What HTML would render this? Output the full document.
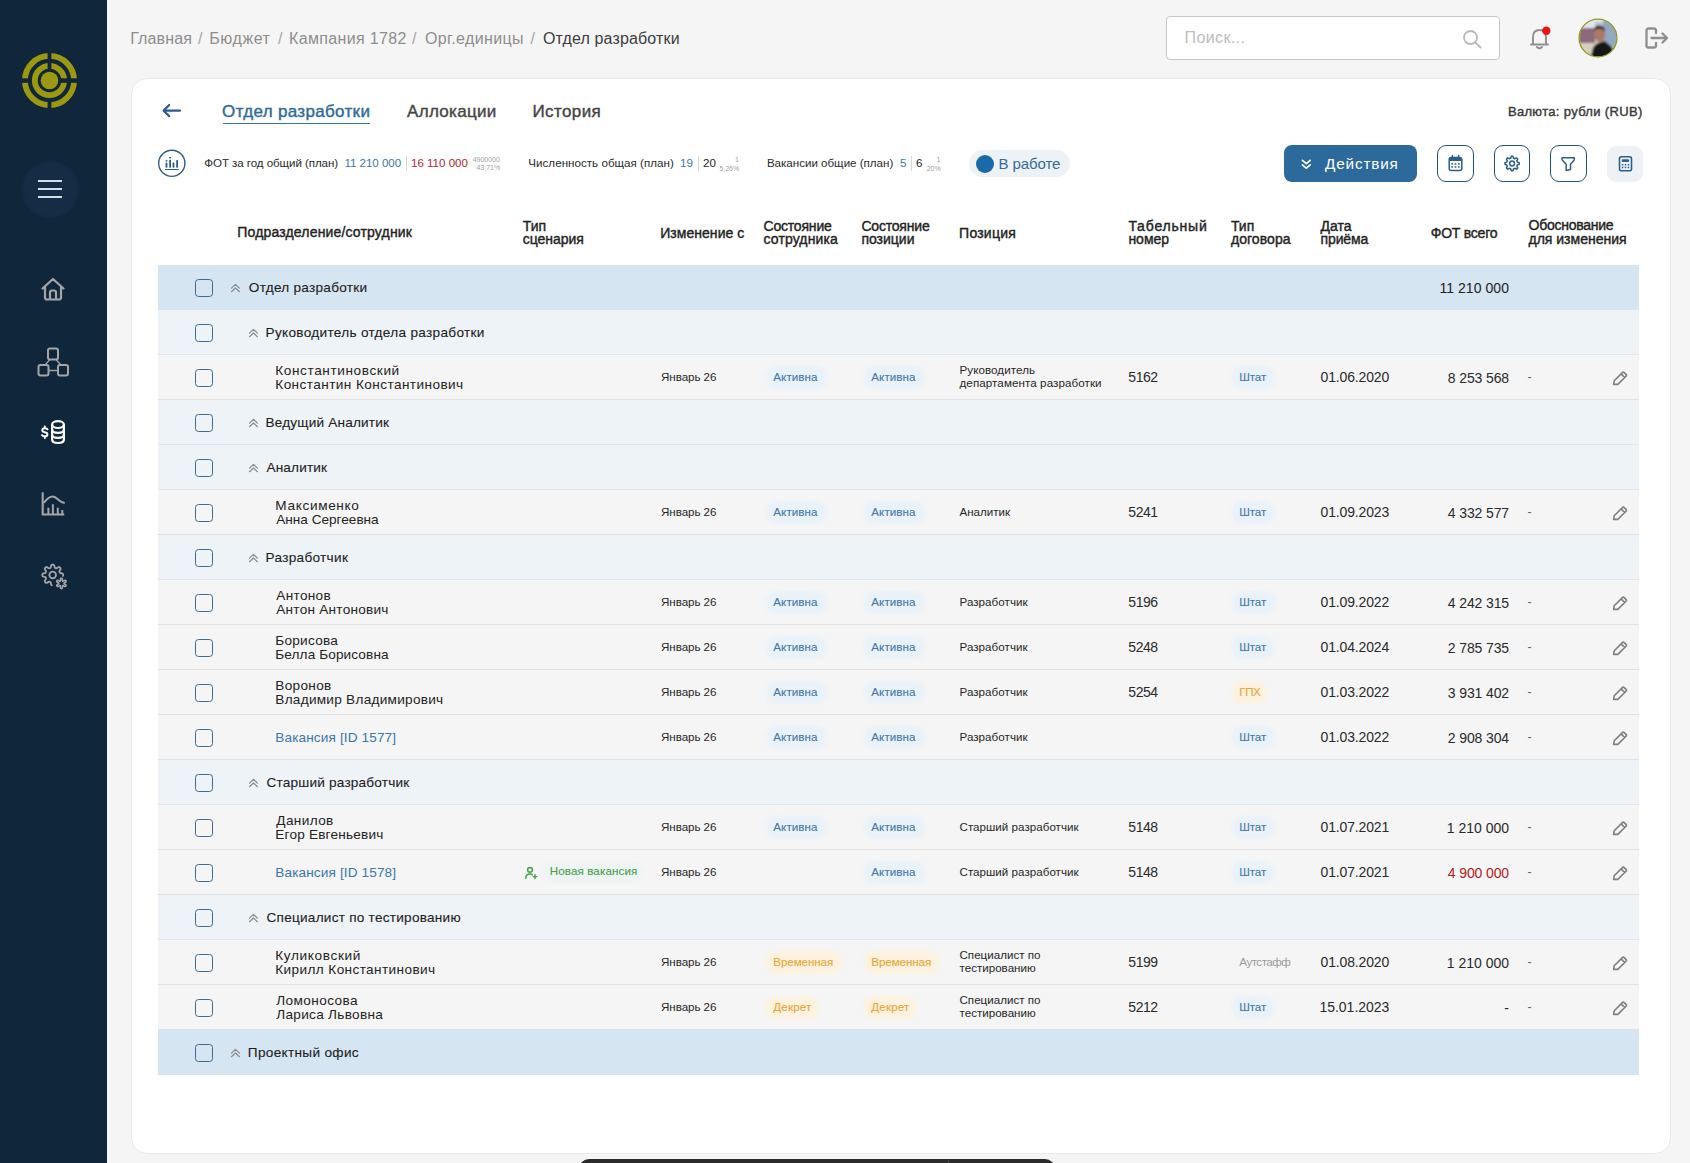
<!DOCTYPE html><html><head><meta charset="utf-8"><style>
html,body{margin:0;padding:0}
body{width:1690px;height:1163px;overflow:hidden;position:relative;background:#f5f5f5;font-family:"Liberation Sans",sans-serif;}
.t{position:absolute;white-space:nowrap;line-height:1;}
.r{position:absolute;}
.m{-webkit-text-stroke:0.4px currentColor;}
.m2{-webkit-text-stroke:0.12px currentColor;}
.m3{-webkit-text-stroke:0.1px currentColor;}
</style></head><body>
<div class="r" style="left:0px;top:0px;width:107px;height:1163px;background:#10263a;"></div>
<svg class="r" style="left:22px;top:53px;" width="55" height="55" viewBox="0 0 55 55" fill="none">
<g fill="none" stroke="#9b9814">
<circle cx="27.5" cy="27.5" r="24.6" stroke-width="5.8"/>
<circle cx="27.5" cy="27.5" r="14.7" stroke-width="5.8"/>
</g>
<circle cx="27.5" cy="27.5" r="8.8" fill="#9b9814"/>
<rect x="25.6" y="0" width="3.8" height="16.5" fill="#10263a"/>
<rect x="25.6" y="48" width="3.8" height="8" fill="#10263a"/>
<rect x="0" y="25.3" width="7" height="4.5" fill="#10263a"/>
<rect x="38.5" y="25.3" width="17" height="4.5" fill="#10263a"/>
</svg>
<div class="r" style="left:21.5px;top:160.5px;width:57px;height:57px;border-radius:50%;background:#142c44;filter:blur(1px);"></div>
<div class="r" style="left:38px;top:180px;width:24px;height:2px;background:#d3dde6;"></div>
<div class="r" style="left:38px;top:188px;width:24px;height:2px;background:#d3dde6;"></div>
<div class="r" style="left:38px;top:196px;width:24px;height:2px;background:#d3dde6;"></div>
<svg class="r" style="left:40px;top:276px;" width="26" height="26" viewBox="0 0 26 26" fill="none"><path d="M2.5 12.5 L13 3 L23.5 12.5 M5 10.5 V21.5 Q5 23.5 7 23.5 H19 Q21 23.5 21 21.5 V10.5 M10 23.5 V16.5 Q10 14.5 12 14.5 H14 Q16 14.5 16 16.5 V23.5" stroke="#a3a6a9" stroke-width="2.2" stroke-linecap="round" stroke-linejoin="round"/></svg>
<svg class="r" style="left:37px;top:347px;" width="32" height="30" viewBox="0 0 32 30" fill="none"><g stroke="#a3a6a9" stroke-width="2" stroke-linejoin="round"><rect x="11" y="1.5" width="10" height="11" rx="2"/><rect x="1.5" y="18" width="10" height="10.5" rx="2"/><rect x="21" y="18" width="10" height="10.5" rx="2"/><path d="M11.5 23.5 H21" stroke-width="1.4"/><path d="M13 12.5 L8 18 M19 12.5 L24 18" stroke-width="1.2"/></g></svg>
<svg class="r" style="left:40px;top:419px;" width="27" height="27" viewBox="0 0 27 27" fill="none"><path d="M4.8 7.6 V9.2 M7.5 10.3 Q7 9.2 4.8 9.2 Q2.3 9.2 2.3 11.2 Q2.3 12.8 4.8 13.2 Q7.4 13.6 7.4 15.4 Q7.4 17.3 4.8 17.3 Q2.6 17.3 2 16.1 M4.8 17.3 V18.9" stroke="#fff" stroke-width="2" fill="none" stroke-linecap="round"/><g stroke="#fff" stroke-width="2.2" fill="none"><ellipse cx="18" cy="5.6" rx="5.9" ry="3.4"/><path d="M12.1 5.6 V20.6 Q12.1 24 18 24 Q23.9 24 23.9 20.6 V5.6"/><path d="M12.1 10.6 Q12.1 13.9 18 13.9 Q23.9 13.9 23.9 10.6"/><path d="M12.1 15.6 Q12.1 18.9 18 18.9 Q23.9 18.9 23.9 15.6"/></g></svg>
<svg class="r" style="left:40px;top:491px;" width="26" height="26" viewBox="0 0 26 26" fill="none"><g stroke="#a3a6a9" stroke-width="2.1" fill="none" stroke-linecap="butt"><path d="M2.7 1.2 V23.5 H24.2"/><path d="M8.4 23.5 V16.7 M12.9 23.5 V13.3 M17.8 23.5 V16.7 M22.3 23.5 V19.1" stroke-width="2"/><path d="M4.2 11.3 C6.5 8.5 9 5.6 12.8 5.6 C16.8 5.6 19.2 11.2 23.9 11.8" stroke-width="2" stroke-linecap="round"/></g></svg>
<svg class="r" style="left:40px;top:562px;" width="28" height="28" viewBox="0 0 28 28" fill="none"><g stroke="#a3a6a9" stroke-width="1.8" fill="none" stroke-linecap="round" stroke-linejoin="round"><path d="M11.80 23.23 L11.52 23.04 L11.27 22.70 L11.07 22.18 L10.92 21.54 L10.80 20.95 L10.67 20.53 L10.51 20.26 L10.33 20.09 L10.14 19.97 L9.94 19.87 L9.74 19.79 L9.53 19.72 L9.30 19.68 L9.05 19.70 L8.72 19.80 L8.30 20.04 L7.78 20.39 L7.22 20.71 L6.73 20.90 L6.34 20.92 L6.02 20.84 L5.75 20.69 L5.50 20.50 L5.28 20.29 L5.09 20.05 L4.92 19.79 L4.80 19.50 L4.78 19.14 L4.89 18.69 L5.17 18.15 L5.53 17.60 L5.82 17.13 L5.98 16.78 L6.02 16.50 L6.00 16.26 L5.94 16.04 L5.87 15.84 L5.78 15.64 L5.67 15.45 L5.52 15.26 L5.30 15.10 L4.94 14.95 L4.42 14.83 L3.78 14.69 L3.19 14.52 L2.78 14.28 L2.54 14.01 L2.40 13.72 L2.33 13.42 L2.30 13.11 L2.31 12.81 L2.34 12.50 L2.43 12.20 L2.59 11.91 L2.87 11.65 L3.33 11.43 L3.95 11.27 L4.57 11.14 L5.05 11.01 L5.36 10.86 L5.56 10.69 L5.70 10.50 L5.80 10.31 L5.89 10.11 L5.96 9.90 L6.01 9.68 L6.02 9.44 L5.95 9.14 L5.76 8.76 L5.44 8.26 L5.08 7.70 L4.84 7.19 L4.77 6.76 L4.83 6.42 L4.96 6.14 L5.13 5.88 L5.34 5.65 L5.56 5.45 L5.82 5.27 L6.10 5.13 L6.44 5.07 L6.85 5.13 L7.36 5.36 L7.92 5.71 L8.42 6.04 L8.82 6.24 L9.12 6.31 L9.36 6.31 L9.59 6.26 L9.79 6.19 L9.99 6.11 L10.19 6.01 L10.38 5.87 L10.55 5.68 L10.70 5.38 L10.83 4.91 L10.96 4.30 L11.12 3.67 L11.33 3.20 L11.59 2.90 L11.88 2.74 L12.18 2.65 L12.48 2.61 L12.79 2.60 L13.10 2.63 L13.40 2.69 L13.69 2.82 L13.96 3.06 L14.20 3.46 L14.38 4.03 L14.52 4.67 L14.64 5.21 L14.79 5.58 L14.95 5.80 L15.13 5.96 L15.33 6.07 L15.52 6.16 L15.73 6.24 L15.94 6.29 L16.18 6.32 L16.45 6.28 L16.80 6.14 L17.26 5.85 L17.81 5.49 L18.35 5.20 L18.81 5.08 L19.17 5.10 L19.47 5.21 L19.74 5.37 L19.97 5.57 L20.19 5.79 L20.37 6.03 L20.53 6.30 L20.62 6.62 L20.61 7.00 L20.43 7.48 L20.11 8.03 L19.76 8.57 L19.51 9.00 L19.40 9.32 L19.38 9.59 L19.42 9.81 L19.48 10.02 L19.56 10.23 L19.66 10.42 L19.78 10.61 L19.95 10.79 L20.20 10.95 L20.61 11.09 L21.19 11.21 L21.83 11.36 L22.37 11.56 L22.72 11.80 L22.92 12.08 L23.03 12.38 L23.08 12.68 L23.10 12.99 L23.09 13.29 L23.03 13.60 L22.93 13.90"/><circle cx="12.7" cy="13" r="3.3"/><path d="M24.00 21.40 L24.01 21.50 L24.04 21.61 L24.10 21.72 L24.23 21.85 L24.47 22.01 L24.86 22.23 L25.32 22.51 L25.72 22.80 L25.96 23.08 L26.06 23.33 L26.07 23.55 L26.02 23.75 L25.94 23.94 L25.83 24.11 L25.70 24.27 L25.54 24.41 L25.32 24.49 L25.03 24.50 L24.63 24.39 L24.16 24.16 L23.71 23.89 L23.36 23.70 L23.14 23.60 L22.98 23.57 L22.86 23.59 L22.76 23.62 L22.67 23.67 L22.59 23.73 L22.51 23.82 L22.45 23.95 L22.42 24.15 L22.41 24.50 L22.41 24.98 L22.39 25.53 L22.31 25.98 L22.17 26.28 L22.00 26.45 L21.80 26.54 L21.60 26.59 L21.40 26.60 L21.20 26.59 L21.00 26.54 L20.80 26.45 L20.63 26.28 L20.49 25.98 L20.41 25.53 L20.39 24.98 L20.39 24.50 L20.38 24.15 L20.35 23.95 L20.29 23.82 L20.21 23.73 L20.13 23.67 L20.04 23.62 L19.94 23.59 L19.82 23.57 L19.66 23.60 L19.44 23.70 L19.09 23.89 L18.64 24.16 L18.17 24.39 L17.77 24.50 L17.48 24.49 L17.26 24.41 L17.10 24.27 L16.97 24.11 L16.86 23.94 L16.78 23.75 L16.73 23.55 L16.74 23.33 L16.84 23.08 L17.08 22.80 L17.48 22.51 L17.94 22.23 L18.33 22.01 L18.57 21.85 L18.70 21.72 L18.76 21.61 L18.79 21.50 L18.80 21.40 L18.79 21.30 L18.76 21.19 L18.70 21.08 L18.57 20.95 L18.33 20.79 L17.94 20.57 L17.48 20.29 L17.08 20.00 L16.84 19.72 L16.74 19.47 L16.73 19.25 L16.78 19.05 L16.86 18.86 L16.97 18.69 L17.10 18.53 L17.26 18.39 L17.48 18.31 L17.77 18.30 L18.17 18.41 L18.64 18.64 L19.09 18.91 L19.44 19.10 L19.66 19.20 L19.82 19.23 L19.94 19.21 L20.04 19.18 L20.13 19.13 L20.21 19.07 L20.29 18.98 L20.35 18.85 L20.38 18.65 L20.39 18.30 L20.39 17.82 L20.41 17.27 L20.49 16.82 L20.63 16.52 L20.80 16.35 L21.00 16.26 L21.20 16.21 L21.40 16.20 L21.60 16.21 L21.80 16.26 L22.00 16.35 L22.17 16.52 L22.31 16.82 L22.39 17.27 L22.41 17.82 L22.41 18.30 L22.42 18.65 L22.45 18.85 L22.51 18.98 L22.59 19.07 L22.67 19.13 L22.76 19.18 L22.86 19.21 L22.98 19.23 L23.14 19.20 L23.36 19.10 L23.71 18.91 L24.16 18.64 L24.63 18.41 L25.03 18.30 L25.32 18.31 L25.54 18.39 L25.70 18.53 L25.83 18.69 L25.94 18.86 L26.02 19.05 L26.07 19.25 L26.06 19.47 L25.96 19.72 L25.72 20.00 L25.32 20.29 L24.86 20.57 L24.47 20.79 L24.23 20.95 L24.10 21.08 L24.04 21.19 L24.01 21.30 L24.00 21.40" stroke-width="1.6"/></g></svg>
<div class="t" style="left:130.20px;top:30.66px;font-size:16px;color:#8d8d8d;letter-spacing:0.128px;">Главная</div>
<div class="t" style="left:198.00px;top:30.66px;font-size:16px;color:#a5a5a5;">/</div>
<div class="t" style="left:209.20px;top:30.66px;font-size:16px;color:#8d8d8d;letter-spacing:0.569px;">Бюджет</div>
<div class="t" style="left:278.00px;top:30.66px;font-size:16px;color:#a5a5a5;">/</div>
<div class="t" style="left:289.00px;top:30.66px;font-size:16px;color:#8d8d8d;letter-spacing:0.337px;">Кампания 1782</div>
<div class="t" style="left:412.00px;top:30.66px;font-size:16px;color:#a5a5a5;">/</div>
<div class="t" style="left:424.90px;top:30.66px;font-size:16px;color:#8d8d8d;letter-spacing:0.367px;">Орг.единицы</div>
<div class="t" style="left:530.50px;top:30.66px;font-size:16px;color:#a5a5a5;">/</div>
<div class="t" style="left:542.90px;top:30.66px;font-size:16px;color:#3d3d3d;letter-spacing:0.152px;">Отдел разработки</div>
<div class="r" style="left:1166px;top:16px;width:332px;height:42px;background:#fff;border:1px solid #c6c6c6;border-radius:4px;"></div>
<div class="t" style="left:1184.50px;top:29.96px;font-size:16px;color:#bdbdbd;letter-spacing:0.396px;">Поиск...</div>
<svg class="r" style="left:1462px;top:29px;" width="22" height="20" viewBox="0 0 22 20" fill="none"><circle cx="8.5" cy="8.5" r="6.5" stroke="#b8b8b8" stroke-width="1.8"/><path d="M13.3 13.3 L18.5 18.5" stroke="#b8b8b8" stroke-width="1.8" stroke-linecap="round"/></svg>
<svg class="r" style="left:1529px;top:26px;" width="24" height="24" viewBox="0 0 24 24" fill="none"><path d="M4 18 V11 Q4 4 10.5 4 Q17 4 17 11 V18 M2 18.5 H19 M8 21 Q10.5 23.5 13 21" stroke="#8f8f8f" stroke-width="1.9" stroke-linecap="round" fill="none"/><circle cx="17.3" cy="4.8" r="4.2" fill="#e8141b"/></svg>
<svg class="r" style="left:1577.5px;top:17.8px;" width="40" height="40" viewBox="0 0 40 40" fill="none"><defs><clipPath id="avc"><circle cx="20" cy="20" r="18.6"/></clipPath><filter id="avb"><feGaussianBlur stdDeviation="0.9"/></filter></defs>
<g clip-path="url(#avc)"><g filter="url(#avb)">
<rect x="0" y="0" width="40" height="40" fill="#dfe6ec"/>
<rect x="0" y="22" width="40" height="18" fill="#d6cfbd"/>
<rect x="1" y="10" width="16" height="15" fill="#8b6a7a"/>
<rect x="25" y="2" width="15" height="27" fill="#93a9c2"/>
<rect x="17" y="4" width="8" height="8" fill="#b9c6d6"/>
<ellipse cx="21.6" cy="16.5" rx="5.6" ry="7.6" fill="#a97a66"/>
<path d="M15.8 13 Q16 7.5 21.5 7.6 Q27.2 7.7 27.2 13.5 Q25 10.6 21.5 10.8 Q17.6 10.8 15.8 13 Z" fill="#3b2a22"/>
<path d="M12.5 40 L15 30 Q17.5 25 22 24.5 L26 23 Q31 25.5 35.5 31.5 L40 40 Z" fill="#121318"/>
</g></g>
<circle cx="20" cy="20" r="18.9" stroke="#8f9a1f" stroke-width="1.3" fill="none"/></svg>
<svg class="r" style="left:1644px;top:26px;" width="27" height="24" viewBox="0 0 27 24" fill="none"><path d="M10 2.5 H4.5 Q2.5 2.5 2.5 4.5 V19.5 Q2.5 21.5 4.5 21.5 H10 Q12 21.5 12 19.5 V17 M12 7 V4.5 Q12 2.5 10 2.5" stroke="#8f8f8f" stroke-width="2.3" fill="none" stroke-linecap="round"/><path d="M7.5 12 H23 M18.5 7.5 L23 12 L18.5 16.5" stroke="#8f8f8f" stroke-width="2.3" fill="none" stroke-linecap="round" stroke-linejoin="round"/></svg>
<div class="r" style="left:131px;top:78px;width:1539.5px;height:1075.5px;background:#fff;border:1px solid #e9e9e9;border-radius:16px;box-sizing:border-box;"></div>
<svg class="r" style="left:160px;top:100px;" width="24" height="20" viewBox="0 0 24 20" fill="none"><path d="M3.6 10.6 H20 M9.2 5 L3.6 10.6 L9.2 16.2" stroke="#2b5e8c" stroke-width="2.2" fill="none" stroke-linecap="round" stroke-linejoin="round"/></svg>
<div class="t m" style="left:222.10px;top:103.21px;font-size:17px;color:#2e6a9c;letter-spacing:0.329px;">Отдел разработки</div>
<div class="r" style="left:222.5px;top:122.8px;width:147px;height:1.6px;background:#3a72a4;border-radius:1px;"></div>
<div class="t m" style="left:407.00px;top:103.21px;font-size:17px;color:#454545;letter-spacing:0.310px;">Аллокации</div>
<div class="t m" style="left:532.40px;top:103.21px;font-size:17px;color:#454545;letter-spacing:0.413px;">История</div>
<div class="t m" style="left:1507.90px;top:104.80px;font-size:13px;color:#3a3a3a;letter-spacing:0.331px;">Валюта: рубли (RUB)</div>
<svg class="r" style="left:157px;top:149px;" width="30" height="30" viewBox="0 0 30 30" fill="none"><circle cx="14.8" cy="14.3" r="13.1" stroke="#2d5d88" stroke-width="1.4"/><g fill="#2d5d88"><rect x="8.6" y="11.1" width="1.8" height="1.5" rx=".5"/><rect x="8.6" y="13.4" width="1.8" height="5.3" rx=".6"/><rect x="12.2" y="8" width="1.8" height="1.5" rx=".5"/><rect x="12.2" y="10.7" width="1.8" height="8" rx=".6"/><rect x="15.6" y="13.5" width="1.8" height="5.2" rx=".6"/><rect x="19.2" y="11.1" width="1.8" height="7.6" rx=".6"/><rect x="8" y="20" width="13.8" height="1.1" rx=".5"/></g></svg>
<div class="t" style="left:204.30px;top:156.68px;font-size:11.6px;color:#2b2b2b;letter-spacing:-0.083px;">ФОТ за год общий (план)</div>
<div class="t" style="left:344.40px;top:156.68px;font-size:11.6px;color:#3c78a8;letter-spacing:-0.046px;">11 210 000</div>
<div class="r" style="left:405.5px;top:156px;width:1px;height:15px;background:#d9d9d9;"></div>
<div class="t" style="left:411.00px;top:156.68px;font-size:11.6px;color:#b3262b;letter-spacing:-0.024px;">16 110 000</div>
<div class="t" style="left:472.64px;top:155.57px;font-size:7px;color:#a0a0a0;">4900000</div>
<div class="t" style="left:476.48px;top:164.07px;font-size:7px;color:#a0a0a0;">43,71%</div>
<div class="t" style="left:528.30px;top:156.68px;font-size:11.6px;color:#2b2b2b;letter-spacing:0.023px;">Численность общая (план)</div>
<div class="t" style="left:680.00px;top:156.68px;font-size:11.6px;color:#3c78a8;">19</div>
<div class="r" style="left:698px;top:156px;width:1px;height:15px;background:#d9d9d9;"></div>
<div class="t" style="left:703.00px;top:156.68px;font-size:11.6px;color:#222;">20</div>
<div class="t" style="left:735.00px;top:156.07px;font-size:7px;color:#a0a0a0;">1</div>
<div class="t" style="left:719.38px;top:164.57px;font-size:7px;color:#a0a0a0;">5,26%</div>
<div class="t" style="left:766.90px;top:156.68px;font-size:11.6px;color:#2b2b2b;letter-spacing:-0.018px;">Вакансии общие (план)</div>
<div class="t" style="left:900.00px;top:156.68px;font-size:11.6px;color:#3c78a8;">5</div>
<div class="r" style="left:911px;top:156px;width:1px;height:15px;background:#d9d9d9;"></div>
<div class="t" style="left:916.00px;top:156.68px;font-size:11.6px;color:#222;">6</div>
<div class="t" style="left:936.50px;top:156.07px;font-size:7px;color:#a0a0a0;">1</div>
<div class="t" style="left:926.71px;top:164.57px;font-size:7px;color:#a0a0a0;">20%</div>
<div class="r" style="left:969px;top:150px;width:101px;height:27px;background:#edf2f7;border-radius:14px;"></div>
<div class="r" style="left:975.5px;top:154.5px;width:18.5px;height:18.5px;background:#1a69a8;border-radius:50%;"></div>
<div class="t" style="left:998.50px;top:156.10px;font-size:15px;color:#36699a;letter-spacing:-0.095px;">В работе</div>
<div class="r" style="left:1283.5px;top:145px;width:133.5px;height:36.6px;background:#2d6a9c;border-radius:8px;"></div>
<svg class="r" style="left:1300px;top:156.5px;" width="13" height="16" viewBox="0 0 13 16" fill="none"><path d="M2.4 3.3 L6.3 6.6 L10.2 3.3 M2.4 7.9 L6.3 11.2 L10.2 7.9" stroke="#fff" stroke-width="1.7" fill="none" stroke-linecap="round" stroke-linejoin="round"/></svg>
<div class="t" style="left:1325.00px;top:155.85px;font-size:15.3px;color:#ffffff;letter-spacing:0.837px;">Действия</div>
<div class="r" style="left:1437px;top:145px;width:36.5px;height:36.6px;border:1.4px solid #24527f;border-radius:9px;box-sizing:border-box;"></div>
<div class="r" style="left:1493.5px;top:145px;width:36.5px;height:36.6px;border:1.4px solid #24527f;border-radius:9px;box-sizing:border-box;"></div>
<div class="r" style="left:1550px;top:145px;width:36.5px;height:36.6px;border:1.4px solid #24527f;border-radius:9px;box-sizing:border-box;"></div>
<div class="r" style="left:1606.5px;top:145.5px;width:36px;height:36.2px;background:#eef2f6;border-radius:9px;"></div>
<svg class="r" style="left:1446px;top:154px;" width="18" height="18" viewBox="0 0 18 18" fill="none"><rect x="3.2" y="3.4" width="12.6" height="13" rx="2" stroke="#2b5f8e" stroke-width="1.5" fill="none"/><rect x="3.2" y="3.6" width="12.6" height="3.4" rx="1" fill="#2b5f8e"/><path d="M6.4 1.4 V4 M12.6 1.4 V4" stroke="#2b5f8e" stroke-width="1.5" stroke-linecap="round"/><g fill="#2b5f8e"><rect x="5.3" y="9.2" width="1.7" height="1.5"/><rect x="8.65" y="9.2" width="1.7" height="1.5"/><rect x="12" y="9.2" width="1.7" height="1.5"/><rect x="5.3" y="12.2" width="1.7" height="1.5"/><rect x="8.65" y="12.2" width="1.7" height="1.5"/><rect x="12" y="12.2" width="1.7" height="1.5"/></g></svg>
<svg class="r" style="left:1502.5px;top:154px;" width="18" height="18" viewBox="0 0 18 18" fill="none"><path d="M14.54 8.17 L16.25 8.64 L16.25 10.36 L14.54 10.83 L13.89 12.41 L14.76 13.95 L13.55 15.16 L12.01 14.29 L10.43 14.94 L9.96 16.65 L8.24 16.65 L7.77 14.94 L6.19 14.29 L4.65 15.16 L3.44 13.95 L4.31 12.41 L3.66 10.83 L1.95 10.36 L1.95 8.64 L3.66 8.17 L4.31 6.59 L3.44 5.05 L4.65 3.84 L6.19 4.71 L7.77 4.06 L8.24 2.35 L9.96 2.35 L10.43 4.06 L12.01 4.71 L13.55 3.84 L14.76 5.05 L13.89 6.59Z" stroke="#2b5f8e" stroke-width="1.5" fill="none" stroke-linejoin="round"/><circle cx="9.1" cy="9.5" r="2.4" stroke="#2b5f8e" stroke-width="1.5" fill="none"/></svg>
<svg class="r" style="left:1559px;top:154px;" width="18" height="18" viewBox="0 0 18 18" fill="none"><path d="M3 3.7 H15.3 V5.3 Q15.3 6 14.6 6.8 L11.5 10.2 V15.6 L7.2 16.6 V10.2 L3.9 6.8 Q3 6 3 5.3 Z" stroke="#2b5f8e" stroke-width="1.5" fill="none" stroke-linejoin="round"/></svg>
<svg class="r" style="left:1615.5px;top:154px;" width="18" height="18" viewBox="0 0 18 18" fill="none"><rect x="3.5" y="2.7" width="12" height="14" rx="2" stroke="#2b5f8e" stroke-width="1.6" fill="none"/><rect x="5.8" y="5.2" width="7.4" height="2.8" rx="1.3" fill="#2b5f8e"/><g fill="#2b5f8e"><rect x="5.8" y="10" width="1.5" height="1.5"/><rect x="8.75" y="10" width="1.5" height="1.5"/><rect x="11.7" y="10" width="1.5" height="1.5"/><rect x="5.8" y="12.7" width="1.5" height="1.5"/><rect x="8.75" y="12.7" width="1.5" height="1.5"/><rect x="11.7" y="12.7" width="1.5" height="1.5"/></g></svg>
<div class="t m" style="left:237.30px;top:225.35px;font-size:14px;color:#232323;letter-spacing:0.166px;">Подразделение/сотрудник</div>
<div class="t m" style="left:522.80px;top:218.95px;font-size:14px;color:#232323;">Тип</div>
<div class="t m" style="left:522.80px;top:232.45px;font-size:14px;color:#232323;letter-spacing:-0.053px;">сценария</div>
<div class="t m" style="left:660.20px;top:225.55px;font-size:14px;color:#232323;letter-spacing:0.046px;">Изменение с</div>
<div class="t m" style="left:763.50px;top:218.95px;font-size:14px;color:#232323;letter-spacing:-0.196px;">Состояние</div>
<div class="t m" style="left:763.50px;top:232.45px;font-size:14px;color:#232323;letter-spacing:0.126px;">сотрудника</div>
<div class="t m" style="left:861.40px;top:218.95px;font-size:14px;color:#232323;letter-spacing:-0.196px;">Состояние</div>
<div class="t m" style="left:861.40px;top:232.45px;font-size:14px;color:#232323;">позиции</div>
<div class="t m" style="left:959.10px;top:225.55px;font-size:14px;color:#232323;letter-spacing:0.222px;">Позиция</div>
<div class="t m" style="left:1128.40px;top:218.95px;font-size:14px;color:#232323;letter-spacing:0.806px;">Табельный</div>
<div class="t m" style="left:1128.40px;top:232.45px;font-size:14px;color:#232323;">номер</div>
<div class="t m" style="left:1230.90px;top:218.95px;font-size:14px;color:#232323;">Тип</div>
<div class="t m" style="left:1230.90px;top:232.45px;font-size:14px;color:#232323;letter-spacing:0.072px;">договора</div>
<div class="t m" style="left:1320.60px;top:218.95px;font-size:14px;color:#232323;">Дата</div>
<div class="t m" style="left:1320.60px;top:232.45px;font-size:14px;color:#232323;letter-spacing:-0.140px;">приёма</div>
<div class="t m" style="left:1430.80px;top:225.85px;font-size:14px;color:#232323;letter-spacing:-0.242px;">ФОТ всего</div>
<div class="t m" style="left:1528.50px;top:218.45px;font-size:14px;color:#232323;letter-spacing:-0.253px;">Обоснование</div>
<div class="t m" style="left:1528.50px;top:231.95px;font-size:14px;color:#232323;letter-spacing:-0.002px;">для изменения</div>
<div class="r" style="left:158px;top:265px;width:1481px;height:45px;background:#d6e5f2;"></div>
<div class="r" style="left:195px;top:278.5px;width:18px;height:18px;box-sizing:border-box;border:1.6px solid #3d6a93;border-radius:3.5px;background:transparent;"></div>
<svg class="r" style="left:230px;top:281.5px;" width="11" height="12" viewBox="0 0 11 12" fill="none"><path d="M1.5 6.1 L5.45 2.4 L9.4 6.1 M1.5 9.7 L5.45 6 L9.4 9.7" stroke="#858a8f" stroke-width="1.2" fill="none" stroke-linecap="round" stroke-linejoin="round"/></svg>
<div class="t m2" style="left:248.80px;top:281.39px;font-size:13.6px;color:#1e1e1e;letter-spacing:0.271px;">Отдел разработки</div>
<div class="t" style="left:1439.40px;top:281.15px;font-size:14px;color:#222;letter-spacing:0.062px;">11 210 000</div>
<div class="r" style="left:158px;top:310px;width:1481px;height:45px;background:#eef3f8;"></div>
<div class="r" style="left:158px;top:354px;width:1481px;height:1px;background:#e2e6ea;"></div>
<div class="r" style="left:195px;top:323.5px;width:18px;height:18px;box-sizing:border-box;border:1.6px solid #3d6a93;border-radius:3.5px;background:transparent;"></div>
<svg class="r" style="left:247.5px;top:326.5px;" width="11" height="12" viewBox="0 0 11 12" fill="none"><path d="M1.5 6.1 L5.45 2.4 L9.4 6.1 M1.5 9.7 L5.45 6 L9.4 9.7" stroke="#858a8f" stroke-width="1.2" fill="none" stroke-linecap="round" stroke-linejoin="round"/></svg>
<div class="t m2" style="left:265.50px;top:326.19px;font-size:13.6px;color:#1e1e1e;letter-spacing:0.312px;">Руководитель отдела разработки</div>
<div class="r" style="left:158px;top:355px;width:1481px;height:45px;background:#f5f5f5;"></div>
<div class="r" style="left:158px;top:399px;width:1481px;height:1px;background:#e1e1e1;"></div>
<div class="r" style="left:195px;top:368.5px;width:18px;height:18px;box-sizing:border-box;border:1.6px solid #3d6a93;border-radius:3.5px;background:transparent;"></div>
<div class="t" style="left:275.30px;top:363.69px;font-size:13.6px;color:#232323;letter-spacing:0.606px;">Константиновский</div>
<div class="t" style="left:275.30px;top:377.59px;font-size:13.6px;color:#232323;letter-spacing:0.423px;">Константин Константинович</div>
<div class="t" style="left:661.00px;top:371.08px;font-size:11.6px;color:#272727;letter-spacing:-0.051px;">Январь 26</div>
<div class="r" style="left:764.5px;top:366.0px;width:63.5px;height:23px;background:#eaf2f9;border-radius:12px;filter:blur(1.4px);"></div>
<div class="t m3" style="left:773.30px;top:370.98px;font-size:11.6px;color:#3f78aa;letter-spacing:0.086px;">Активна</div>
<div class="r" style="left:862.5px;top:366.0px;width:63.5px;height:23px;background:#eaf2f9;border-radius:12px;filter:blur(1.4px);"></div>
<div class="t m3" style="left:871.30px;top:370.98px;font-size:11.6px;color:#3f78aa;letter-spacing:0.086px;">Активна</div>
<div class="t" style="left:959.50px;top:363.68px;font-size:11.6px;color:#272727;letter-spacing:0.077px;">Руководитель</div>
<div class="t" style="left:959.50px;top:377.38px;font-size:11.6px;color:#272727;letter-spacing:0.090px;">департамента разработки</div>
<div class="t" style="left:1128.30px;top:370.15px;font-size:14px;color:#2a2a2a;letter-spacing:-0.453px;">5162</div>
<div class="r" style="left:1230.5px;top:366.0px;width:45px;height:23px;background:#eaf2f9;border-radius:12px;filter:blur(1.4px);"></div>
<div class="t m3" style="left:1239.30px;top:370.98px;font-size:11.6px;color:#3f78aa;letter-spacing:-0.133px;">Штат</div>
<div class="t" style="left:1320.50px;top:370.15px;font-size:14px;color:#2a2a2a;letter-spacing:-0.142px;">01.06.2020</div>
<div class="t" style="left:1447.80px;top:371.15px;font-size:14px;color:#2a2a2a;letter-spacing:-0.125px;">8 253 568</div>
<div class="t" style="left:1527.60px;top:371.34px;font-size:12px;color:#5f5f5f;">-</div>
<svg class="r" style="left:1611px;top:369.5px;" width="17" height="17" viewBox="0 0 17 17" fill="none"><path d="M2.6 14.4 L3.2 10.8 L11.4 2.6 Q12.3 1.7 13.2 2.6 L15 4.4 Q15.9 5.3 15 6.2 L6.8 14.4 Z M10.1 3.9 L13.7 7.5" stroke="#7f7f7f" stroke-width="1.6" fill="none" stroke-linejoin="round"/></svg>
<div class="r" style="left:158px;top:400px;width:1481px;height:45px;background:#eef3f8;"></div>
<div class="r" style="left:158px;top:444px;width:1481px;height:1px;background:#e2e6ea;"></div>
<div class="r" style="left:195px;top:413.5px;width:18px;height:18px;box-sizing:border-box;border:1.6px solid #3d6a93;border-radius:3.5px;background:transparent;"></div>
<svg class="r" style="left:247.5px;top:416.5px;" width="11" height="12" viewBox="0 0 11 12" fill="none"><path d="M1.5 6.1 L5.45 2.4 L9.4 6.1 M1.5 9.7 L5.45 6 L9.4 9.7" stroke="#858a8f" stroke-width="1.2" fill="none" stroke-linecap="round" stroke-linejoin="round"/></svg>
<div class="t m2" style="left:265.50px;top:416.19px;font-size:13.6px;color:#1e1e1e;letter-spacing:0.188px;">Ведущий Аналитик</div>
<div class="r" style="left:158px;top:445px;width:1481px;height:45px;background:#eef3f8;"></div>
<div class="r" style="left:158px;top:489px;width:1481px;height:1px;background:#e2e6ea;"></div>
<div class="r" style="left:195px;top:458.5px;width:18px;height:18px;box-sizing:border-box;border:1.6px solid #3d6a93;border-radius:3.5px;background:transparent;"></div>
<svg class="r" style="left:247.5px;top:461.5px;" width="11" height="12" viewBox="0 0 11 12" fill="none"><path d="M1.5 6.1 L5.45 2.4 L9.4 6.1 M1.5 9.7 L5.45 6 L9.4 9.7" stroke="#858a8f" stroke-width="1.2" fill="none" stroke-linecap="round" stroke-linejoin="round"/></svg>
<div class="t m2" style="left:266.50px;top:461.19px;font-size:13.6px;color:#1e1e1e;letter-spacing:0.146px;">Аналитик</div>
<div class="r" style="left:158px;top:490px;width:1481px;height:45px;background:#f5f5f5;"></div>
<div class="r" style="left:158px;top:534px;width:1481px;height:1px;background:#e1e1e1;"></div>
<div class="r" style="left:195px;top:503.5px;width:18px;height:18px;box-sizing:border-box;border:1.6px solid #3d6a93;border-radius:3.5px;background:transparent;"></div>
<div class="t" style="left:275.30px;top:498.69px;font-size:13.6px;color:#232323;letter-spacing:0.662px;">Максименко</div>
<div class="t" style="left:276.30px;top:512.59px;font-size:13.6px;color:#232323;letter-spacing:-0.005px;">Анна Сергеевна</div>
<div class="t" style="left:661.00px;top:506.08px;font-size:11.6px;color:#272727;letter-spacing:-0.051px;">Январь 26</div>
<div class="r" style="left:764.5px;top:501.0px;width:63.5px;height:23px;background:#eaf2f9;border-radius:12px;filter:blur(1.4px);"></div>
<div class="t m3" style="left:773.30px;top:505.98px;font-size:11.6px;color:#3f78aa;letter-spacing:0.086px;">Активна</div>
<div class="r" style="left:862.5px;top:501.0px;width:63.5px;height:23px;background:#eaf2f9;border-radius:12px;filter:blur(1.4px);"></div>
<div class="t m3" style="left:871.30px;top:505.98px;font-size:11.6px;color:#3f78aa;letter-spacing:0.086px;">Активна</div>
<div class="t" style="left:959.50px;top:505.98px;font-size:11.6px;color:#272727;letter-spacing:-0.030px;">Аналитик</div>
<div class="t" style="left:1128.30px;top:505.15px;font-size:14px;color:#2a2a2a;letter-spacing:-0.453px;">5241</div>
<div class="r" style="left:1230.5px;top:501.0px;width:45px;height:23px;background:#eaf2f9;border-radius:12px;filter:blur(1.4px);"></div>
<div class="t m3" style="left:1239.30px;top:505.98px;font-size:11.6px;color:#3f78aa;letter-spacing:-0.133px;">Штат</div>
<div class="t" style="left:1320.50px;top:505.15px;font-size:14px;color:#2a2a2a;letter-spacing:-0.142px;">01.09.2023</div>
<div class="t" style="left:1447.80px;top:506.15px;font-size:14px;color:#2a2a2a;letter-spacing:-0.125px;">4 332 577</div>
<div class="t" style="left:1527.60px;top:506.34px;font-size:12px;color:#5f5f5f;">-</div>
<svg class="r" style="left:1611px;top:504.5px;" width="17" height="17" viewBox="0 0 17 17" fill="none"><path d="M2.6 14.4 L3.2 10.8 L11.4 2.6 Q12.3 1.7 13.2 2.6 L15 4.4 Q15.9 5.3 15 6.2 L6.8 14.4 Z M10.1 3.9 L13.7 7.5" stroke="#7f7f7f" stroke-width="1.6" fill="none" stroke-linejoin="round"/></svg>
<div class="r" style="left:158px;top:535px;width:1481px;height:45px;background:#eef3f8;"></div>
<div class="r" style="left:158px;top:579px;width:1481px;height:1px;background:#e2e6ea;"></div>
<div class="r" style="left:195px;top:548.5px;width:18px;height:18px;box-sizing:border-box;border:1.6px solid #3d6a93;border-radius:3.5px;background:transparent;"></div>
<svg class="r" style="left:247.5px;top:551.5px;" width="11" height="12" viewBox="0 0 11 12" fill="none"><path d="M1.5 6.1 L5.45 2.4 L9.4 6.1 M1.5 9.7 L5.45 6 L9.4 9.7" stroke="#858a8f" stroke-width="1.2" fill="none" stroke-linecap="round" stroke-linejoin="round"/></svg>
<div class="t m2" style="left:265.50px;top:551.19px;font-size:13.6px;color:#1e1e1e;letter-spacing:0.308px;">Разработчик</div>
<div class="r" style="left:158px;top:580px;width:1481px;height:45px;background:#f5f5f5;"></div>
<div class="r" style="left:158px;top:624px;width:1481px;height:1px;background:#e1e1e1;"></div>
<div class="r" style="left:195px;top:593.5px;width:18px;height:18px;box-sizing:border-box;border:1.6px solid #3d6a93;border-radius:3.5px;background:transparent;"></div>
<div class="t" style="left:276.30px;top:588.69px;font-size:13.6px;color:#232323;letter-spacing:0.321px;">Антонов</div>
<div class="t" style="left:276.30px;top:602.59px;font-size:13.6px;color:#232323;letter-spacing:0.244px;">Антон Антонович</div>
<div class="t" style="left:661.00px;top:596.08px;font-size:11.6px;color:#272727;letter-spacing:-0.051px;">Январь 26</div>
<div class="r" style="left:764.5px;top:591.0px;width:63.5px;height:23px;background:#eaf2f9;border-radius:12px;filter:blur(1.4px);"></div>
<div class="t m3" style="left:773.30px;top:595.98px;font-size:11.6px;color:#3f78aa;letter-spacing:0.086px;">Активна</div>
<div class="r" style="left:862.5px;top:591.0px;width:63.5px;height:23px;background:#eaf2f9;border-radius:12px;filter:blur(1.4px);"></div>
<div class="t m3" style="left:871.30px;top:595.98px;font-size:11.6px;color:#3f78aa;letter-spacing:0.086px;">Активна</div>
<div class="t" style="left:959.50px;top:595.98px;font-size:11.6px;color:#272727;letter-spacing:0.046px;">Разработчик</div>
<div class="t" style="left:1128.30px;top:595.15px;font-size:14px;color:#2a2a2a;letter-spacing:-0.453px;">5196</div>
<div class="r" style="left:1230.5px;top:591.0px;width:45px;height:23px;background:#eaf2f9;border-radius:12px;filter:blur(1.4px);"></div>
<div class="t m3" style="left:1239.30px;top:595.98px;font-size:11.6px;color:#3f78aa;letter-spacing:-0.133px;">Штат</div>
<div class="t" style="left:1320.50px;top:595.15px;font-size:14px;color:#2a2a2a;letter-spacing:-0.142px;">01.09.2022</div>
<div class="t" style="left:1447.80px;top:596.15px;font-size:14px;color:#2a2a2a;letter-spacing:-0.125px;">4 242 315</div>
<div class="t" style="left:1527.60px;top:596.34px;font-size:12px;color:#5f5f5f;">-</div>
<svg class="r" style="left:1611px;top:594.5px;" width="17" height="17" viewBox="0 0 17 17" fill="none"><path d="M2.6 14.4 L3.2 10.8 L11.4 2.6 Q12.3 1.7 13.2 2.6 L15 4.4 Q15.9 5.3 15 6.2 L6.8 14.4 Z M10.1 3.9 L13.7 7.5" stroke="#7f7f7f" stroke-width="1.6" fill="none" stroke-linejoin="round"/></svg>
<div class="r" style="left:158px;top:625px;width:1481px;height:45px;background:#f5f5f5;"></div>
<div class="r" style="left:158px;top:669px;width:1481px;height:1px;background:#e1e1e1;"></div>
<div class="r" style="left:195px;top:638.5px;width:18px;height:18px;box-sizing:border-box;border:1.6px solid #3d6a93;border-radius:3.5px;background:transparent;"></div>
<div class="t" style="left:275.30px;top:633.69px;font-size:13.6px;color:#232323;letter-spacing:0.255px;">Борисова</div>
<div class="t" style="left:275.30px;top:647.59px;font-size:13.6px;color:#232323;letter-spacing:0.114px;">Белла Борисовна</div>
<div class="t" style="left:661.00px;top:641.08px;font-size:11.6px;color:#272727;letter-spacing:-0.051px;">Январь 26</div>
<div class="r" style="left:764.5px;top:636.0px;width:63.5px;height:23px;background:#eaf2f9;border-radius:12px;filter:blur(1.4px);"></div>
<div class="t m3" style="left:773.30px;top:640.98px;font-size:11.6px;color:#3f78aa;letter-spacing:0.086px;">Активна</div>
<div class="r" style="left:862.5px;top:636.0px;width:63.5px;height:23px;background:#eaf2f9;border-radius:12px;filter:blur(1.4px);"></div>
<div class="t m3" style="left:871.30px;top:640.98px;font-size:11.6px;color:#3f78aa;letter-spacing:0.086px;">Активна</div>
<div class="t" style="left:959.50px;top:640.98px;font-size:11.6px;color:#272727;letter-spacing:0.046px;">Разработчик</div>
<div class="t" style="left:1128.30px;top:640.15px;font-size:14px;color:#2a2a2a;letter-spacing:-0.453px;">5248</div>
<div class="r" style="left:1230.5px;top:636.0px;width:45px;height:23px;background:#eaf2f9;border-radius:12px;filter:blur(1.4px);"></div>
<div class="t m3" style="left:1239.30px;top:640.98px;font-size:11.6px;color:#3f78aa;letter-spacing:-0.133px;">Штат</div>
<div class="t" style="left:1320.50px;top:640.15px;font-size:14px;color:#2a2a2a;letter-spacing:-0.142px;">01.04.2024</div>
<div class="t" style="left:1447.80px;top:641.15px;font-size:14px;color:#2a2a2a;letter-spacing:-0.125px;">2 785 735</div>
<div class="t" style="left:1527.60px;top:641.34px;font-size:12px;color:#5f5f5f;">-</div>
<svg class="r" style="left:1611px;top:639.5px;" width="17" height="17" viewBox="0 0 17 17" fill="none"><path d="M2.6 14.4 L3.2 10.8 L11.4 2.6 Q12.3 1.7 13.2 2.6 L15 4.4 Q15.9 5.3 15 6.2 L6.8 14.4 Z M10.1 3.9 L13.7 7.5" stroke="#7f7f7f" stroke-width="1.6" fill="none" stroke-linejoin="round"/></svg>
<div class="r" style="left:158px;top:670px;width:1481px;height:45px;background:#f5f5f5;"></div>
<div class="r" style="left:158px;top:714px;width:1481px;height:1px;background:#e1e1e1;"></div>
<div class="r" style="left:195px;top:683.5px;width:18px;height:18px;box-sizing:border-box;border:1.6px solid #3d6a93;border-radius:3.5px;background:transparent;"></div>
<div class="t" style="left:275.30px;top:678.69px;font-size:13.6px;color:#232323;letter-spacing:0.331px;">Воронов</div>
<div class="t" style="left:275.30px;top:692.59px;font-size:13.6px;color:#232323;letter-spacing:0.274px;">Владимир Владимирович</div>
<div class="t" style="left:661.00px;top:686.08px;font-size:11.6px;color:#272727;letter-spacing:-0.051px;">Январь 26</div>
<div class="r" style="left:764.5px;top:681.0px;width:63.5px;height:23px;background:#eaf2f9;border-radius:12px;filter:blur(1.4px);"></div>
<div class="t m3" style="left:773.30px;top:685.98px;font-size:11.6px;color:#3f78aa;letter-spacing:0.086px;">Активна</div>
<div class="r" style="left:862.5px;top:681.0px;width:63.5px;height:23px;background:#eaf2f9;border-radius:12px;filter:blur(1.4px);"></div>
<div class="t m3" style="left:871.30px;top:685.98px;font-size:11.6px;color:#3f78aa;letter-spacing:0.086px;">Активна</div>
<div class="t" style="left:959.50px;top:685.98px;font-size:11.6px;color:#272727;letter-spacing:0.046px;">Разработчик</div>
<div class="t" style="left:1128.30px;top:685.15px;font-size:14px;color:#2a2a2a;letter-spacing:-0.453px;">5254</div>
<div class="r" style="left:1230.5px;top:681.0px;width:36px;height:23px;background:#fdf2df;border-radius:12px;filter:blur(1.4px);"></div>
<div class="t m3" style="left:1239.30px;top:685.98px;font-size:11.6px;color:#eaa532;letter-spacing:-0.406px;">ГПХ</div>
<div class="t" style="left:1320.50px;top:685.15px;font-size:14px;color:#2a2a2a;letter-spacing:-0.142px;">01.03.2022</div>
<div class="t" style="left:1447.80px;top:686.15px;font-size:14px;color:#2a2a2a;letter-spacing:-0.125px;">3 931 402</div>
<div class="t" style="left:1527.60px;top:686.34px;font-size:12px;color:#5f5f5f;">-</div>
<svg class="r" style="left:1611px;top:684.5px;" width="17" height="17" viewBox="0 0 17 17" fill="none"><path d="M2.6 14.4 L3.2 10.8 L11.4 2.6 Q12.3 1.7 13.2 2.6 L15 4.4 Q15.9 5.3 15 6.2 L6.8 14.4 Z M10.1 3.9 L13.7 7.5" stroke="#7f7f7f" stroke-width="1.6" fill="none" stroke-linejoin="round"/></svg>
<div class="r" style="left:158px;top:715px;width:1481px;height:45px;background:#f5f5f5;"></div>
<div class="r" style="left:158px;top:759px;width:1481px;height:1px;background:#e1e1e1;"></div>
<div class="r" style="left:195px;top:728.5px;width:18px;height:18px;box-sizing:border-box;border:1.6px solid #3d6a93;border-radius:3.5px;background:transparent;"></div>
<div class="t" style="left:275.30px;top:730.99px;font-size:13.6px;color:#3a78ad;letter-spacing:0.126px;">Вакансия [ID 1577]</div>
<div class="t" style="left:661.00px;top:731.08px;font-size:11.6px;color:#272727;letter-spacing:-0.051px;">Январь 26</div>
<div class="r" style="left:764.5px;top:726.0px;width:63.5px;height:23px;background:#eaf2f9;border-radius:12px;filter:blur(1.4px);"></div>
<div class="t m3" style="left:773.30px;top:730.98px;font-size:11.6px;color:#3f78aa;letter-spacing:0.086px;">Активна</div>
<div class="r" style="left:862.5px;top:726.0px;width:63.5px;height:23px;background:#eaf2f9;border-radius:12px;filter:blur(1.4px);"></div>
<div class="t m3" style="left:871.30px;top:730.98px;font-size:11.6px;color:#3f78aa;letter-spacing:0.086px;">Активна</div>
<div class="t" style="left:959.50px;top:730.98px;font-size:11.6px;color:#272727;letter-spacing:0.046px;">Разработчик</div>
<div class="r" style="left:1230.5px;top:726.0px;width:45px;height:23px;background:#eaf2f9;border-radius:12px;filter:blur(1.4px);"></div>
<div class="t m3" style="left:1239.30px;top:730.98px;font-size:11.6px;color:#3f78aa;letter-spacing:-0.133px;">Штат</div>
<div class="t" style="left:1320.50px;top:730.15px;font-size:14px;color:#2a2a2a;letter-spacing:-0.142px;">01.03.2022</div>
<div class="t" style="left:1447.80px;top:731.15px;font-size:14px;color:#2a2a2a;letter-spacing:-0.125px;">2 908 304</div>
<div class="t" style="left:1527.60px;top:731.34px;font-size:12px;color:#5f5f5f;">-</div>
<svg class="r" style="left:1611px;top:729.5px;" width="17" height="17" viewBox="0 0 17 17" fill="none"><path d="M2.6 14.4 L3.2 10.8 L11.4 2.6 Q12.3 1.7 13.2 2.6 L15 4.4 Q15.9 5.3 15 6.2 L6.8 14.4 Z M10.1 3.9 L13.7 7.5" stroke="#7f7f7f" stroke-width="1.6" fill="none" stroke-linejoin="round"/></svg>
<div class="r" style="left:158px;top:760px;width:1481px;height:45px;background:#eef3f8;"></div>
<div class="r" style="left:158px;top:804px;width:1481px;height:1px;background:#e2e6ea;"></div>
<div class="r" style="left:195px;top:773.5px;width:18px;height:18px;box-sizing:border-box;border:1.6px solid #3d6a93;border-radius:3.5px;background:transparent;"></div>
<svg class="r" style="left:247.5px;top:776.5px;" width="11" height="12" viewBox="0 0 11 12" fill="none"><path d="M1.5 6.1 L5.45 2.4 L9.4 6.1 M1.5 9.7 L5.45 6 L9.4 9.7" stroke="#858a8f" stroke-width="1.2" fill="none" stroke-linecap="round" stroke-linejoin="round"/></svg>
<div class="t m2" style="left:266.50px;top:776.19px;font-size:13.6px;color:#1e1e1e;letter-spacing:0.203px;">Старший разработчик</div>
<div class="r" style="left:158px;top:805px;width:1481px;height:45px;background:#f5f5f5;"></div>
<div class="r" style="left:158px;top:849px;width:1481px;height:1px;background:#e1e1e1;"></div>
<div class="r" style="left:195px;top:818.5px;width:18px;height:18px;box-sizing:border-box;border:1.6px solid #3d6a93;border-radius:3.5px;background:transparent;"></div>
<div class="t" style="left:276.30px;top:813.69px;font-size:13.6px;color:#232323;letter-spacing:0.381px;">Данилов</div>
<div class="t" style="left:275.30px;top:827.59px;font-size:13.6px;color:#232323;letter-spacing:0.200px;">Егор Евгеньевич</div>
<div class="t" style="left:661.00px;top:821.08px;font-size:11.6px;color:#272727;letter-spacing:-0.051px;">Январь 26</div>
<div class="r" style="left:764.5px;top:816.0px;width:63.5px;height:23px;background:#eaf2f9;border-radius:12px;filter:blur(1.4px);"></div>
<div class="t m3" style="left:773.30px;top:820.98px;font-size:11.6px;color:#3f78aa;letter-spacing:0.086px;">Активна</div>
<div class="r" style="left:862.5px;top:816.0px;width:63.5px;height:23px;background:#eaf2f9;border-radius:12px;filter:blur(1.4px);"></div>
<div class="t m3" style="left:871.30px;top:820.98px;font-size:11.6px;color:#3f78aa;letter-spacing:0.086px;">Активна</div>
<div class="t" style="left:959.50px;top:820.98px;font-size:11.6px;color:#272727;letter-spacing:0.024px;">Старший разработчик</div>
<div class="t" style="left:1128.30px;top:820.15px;font-size:14px;color:#2a2a2a;letter-spacing:-0.453px;">5148</div>
<div class="r" style="left:1230.5px;top:816.0px;width:45px;height:23px;background:#eaf2f9;border-radius:12px;filter:blur(1.4px);"></div>
<div class="t m3" style="left:1239.30px;top:820.98px;font-size:11.6px;color:#3f78aa;letter-spacing:-0.133px;">Штат</div>
<div class="t" style="left:1320.50px;top:820.15px;font-size:14px;color:#2a2a2a;letter-spacing:-0.142px;">01.07.2021</div>
<div class="t" style="left:1446.80px;top:821.15px;font-size:14px;color:#2a2a2a;letter-spacing:0.000px;">1 210 000</div>
<div class="t" style="left:1527.60px;top:821.34px;font-size:12px;color:#5f5f5f;">-</div>
<svg class="r" style="left:1611px;top:819.5px;" width="17" height="17" viewBox="0 0 17 17" fill="none"><path d="M2.6 14.4 L3.2 10.8 L11.4 2.6 Q12.3 1.7 13.2 2.6 L15 4.4 Q15.9 5.3 15 6.2 L6.8 14.4 Z M10.1 3.9 L13.7 7.5" stroke="#7f7f7f" stroke-width="1.6" fill="none" stroke-linejoin="round"/></svg>
<div class="r" style="left:158px;top:850px;width:1481px;height:45px;background:#f5f5f5;"></div>
<div class="r" style="left:158px;top:894px;width:1481px;height:1px;background:#e1e1e1;"></div>
<div class="r" style="left:195px;top:863.5px;width:18px;height:18px;box-sizing:border-box;border:1.6px solid #3d6a93;border-radius:3.5px;background:transparent;"></div>
<div class="t" style="left:275.30px;top:865.99px;font-size:13.6px;color:#3a78ad;letter-spacing:0.126px;">Вакансия [ID 1578]</div>
<svg class="r" style="left:523.5px;top:866.0px;" width="15" height="14" viewBox="0 0 15 14" fill="none"><circle cx="6" cy="3.8" r="2.4" stroke="#43a047" stroke-width="1.5" fill="none"/><path d="M1.8 12.2 Q1.8 8 6 8 Q7.4 8 8.4 8.6" stroke="#43a047" stroke-width="1.5" fill="none" stroke-linecap="round"/><path d="M11 8.6 V12.6 M9 10.6 H13" stroke="#43a047" stroke-width="1.4" stroke-linecap="round"/></svg>
<div class="r" style="left:541px;top:861.5px;width:103px;height:22px;background:#edf3f4;border-radius:11px;filter:blur(0.8px);opacity:.6;"></div>
<div class="t m3" style="left:549.70px;top:865.48px;font-size:11.6px;color:#46a049;letter-spacing:0.121px;">Новая вакансия</div>
<div class="t" style="left:661.00px;top:866.08px;font-size:11.6px;color:#272727;letter-spacing:-0.051px;">Январь 26</div>
<div class="r" style="left:862.5px;top:861.0px;width:63.5px;height:23px;background:#eaf2f9;border-radius:12px;filter:blur(1.4px);"></div>
<div class="t m3" style="left:871.30px;top:865.98px;font-size:11.6px;color:#3f78aa;letter-spacing:0.086px;">Активна</div>
<div class="t" style="left:959.50px;top:865.98px;font-size:11.6px;color:#272727;letter-spacing:0.024px;">Старший разработчик</div>
<div class="t" style="left:1128.30px;top:865.15px;font-size:14px;color:#2a2a2a;letter-spacing:-0.453px;">5148</div>
<div class="r" style="left:1230.5px;top:861.0px;width:45px;height:23px;background:#eaf2f9;border-radius:12px;filter:blur(1.4px);"></div>
<div class="t m3" style="left:1239.30px;top:865.98px;font-size:11.6px;color:#3f78aa;letter-spacing:-0.133px;">Штат</div>
<div class="t" style="left:1320.50px;top:865.15px;font-size:14px;color:#2a2a2a;letter-spacing:-0.142px;">01.07.2021</div>
<div class="t" style="left:1447.80px;top:866.15px;font-size:14px;color:#b32020;letter-spacing:-0.125px;">4 900 000</div>
<div class="t" style="left:1527.60px;top:866.34px;font-size:12px;color:#5f5f5f;">-</div>
<svg class="r" style="left:1611px;top:864.5px;" width="17" height="17" viewBox="0 0 17 17" fill="none"><path d="M2.6 14.4 L3.2 10.8 L11.4 2.6 Q12.3 1.7 13.2 2.6 L15 4.4 Q15.9 5.3 15 6.2 L6.8 14.4 Z M10.1 3.9 L13.7 7.5" stroke="#7f7f7f" stroke-width="1.6" fill="none" stroke-linejoin="round"/></svg>
<div class="r" style="left:158px;top:895px;width:1481px;height:45px;background:#eef3f8;"></div>
<div class="r" style="left:158px;top:939px;width:1481px;height:1px;background:#e2e6ea;"></div>
<div class="r" style="left:195px;top:908.5px;width:18px;height:18px;box-sizing:border-box;border:1.6px solid #3d6a93;border-radius:3.5px;background:transparent;"></div>
<svg class="r" style="left:247.5px;top:911.5px;" width="11" height="12" viewBox="0 0 11 12" fill="none"><path d="M1.5 6.1 L5.45 2.4 L9.4 6.1 M1.5 9.7 L5.45 6 L9.4 9.7" stroke="#858a8f" stroke-width="1.2" fill="none" stroke-linecap="round" stroke-linejoin="round"/></svg>
<div class="t m2" style="left:266.50px;top:911.19px;font-size:13.6px;color:#1e1e1e;letter-spacing:0.244px;">Специалист по тестированию</div>
<div class="r" style="left:158px;top:940px;width:1481px;height:45px;background:#f5f5f5;"></div>
<div class="r" style="left:158px;top:984px;width:1481px;height:1px;background:#e1e1e1;"></div>
<div class="r" style="left:195px;top:953.5px;width:18px;height:18px;box-sizing:border-box;border:1.6px solid #3d6a93;border-radius:3.5px;background:transparent;"></div>
<div class="t" style="left:275.30px;top:948.69px;font-size:13.6px;color:#232323;letter-spacing:0.649px;">Куликовский</div>
<div class="t" style="left:275.30px;top:962.59px;font-size:13.6px;color:#232323;letter-spacing:0.388px;">Кирилл Константинович</div>
<div class="t" style="left:661.00px;top:956.08px;font-size:11.6px;color:#272727;letter-spacing:-0.051px;">Январь 26</div>
<div class="r" style="left:764.5px;top:951.0px;width:77px;height:23px;background:#fdf2df;border-radius:12px;filter:blur(1.4px);"></div>
<div class="t m3" style="left:773.30px;top:955.98px;font-size:11.6px;color:#eaa532;letter-spacing:-0.088px;">Временная</div>
<div class="r" style="left:862.5px;top:951.0px;width:77px;height:23px;background:#fdf2df;border-radius:12px;filter:blur(1.4px);"></div>
<div class="t m3" style="left:871.30px;top:955.98px;font-size:11.6px;color:#eaa532;letter-spacing:-0.088px;">Временная</div>
<div class="t" style="left:959.50px;top:948.68px;font-size:11.6px;color:#272727;">Специалист по</div>
<div class="t" style="left:959.50px;top:962.38px;font-size:11.6px;color:#272727;">тестированию</div>
<div class="t" style="left:1128.30px;top:955.15px;font-size:14px;color:#2a2a2a;letter-spacing:-0.453px;">5199</div>
<div class="t" style="left:1239.30px;top:956.18px;font-size:11.6px;color:#9a9a9a;letter-spacing:-0.506px;">Аутстафф</div>
<div class="t" style="left:1320.50px;top:955.15px;font-size:14px;color:#2a2a2a;letter-spacing:-0.142px;">01.08.2020</div>
<div class="t" style="left:1446.80px;top:956.15px;font-size:14px;color:#2a2a2a;letter-spacing:0.000px;">1 210 000</div>
<div class="t" style="left:1527.60px;top:956.34px;font-size:12px;color:#5f5f5f;">-</div>
<svg class="r" style="left:1611px;top:954.5px;" width="17" height="17" viewBox="0 0 17 17" fill="none"><path d="M2.6 14.4 L3.2 10.8 L11.4 2.6 Q12.3 1.7 13.2 2.6 L15 4.4 Q15.9 5.3 15 6.2 L6.8 14.4 Z M10.1 3.9 L13.7 7.5" stroke="#7f7f7f" stroke-width="1.6" fill="none" stroke-linejoin="round"/></svg>
<div class="r" style="left:158px;top:985px;width:1481px;height:45px;background:#f5f5f5;"></div>
<div class="r" style="left:158px;top:1029px;width:1481px;height:1px;background:#e1e1e1;"></div>
<div class="r" style="left:195px;top:998.5px;width:18px;height:18px;box-sizing:border-box;border:1.6px solid #3d6a93;border-radius:3.5px;background:transparent;"></div>
<div class="t" style="left:276.30px;top:993.69px;font-size:13.6px;color:#232323;letter-spacing:0.407px;">Ломоносова</div>
<div class="t" style="left:276.30px;top:1007.59px;font-size:13.6px;color:#232323;letter-spacing:0.290px;">Лариса Львовна</div>
<div class="t" style="left:661.00px;top:1001.08px;font-size:11.6px;color:#272727;letter-spacing:-0.051px;">Январь 26</div>
<div class="r" style="left:764.5px;top:996.0px;width:54.5px;height:23px;background:#fdf2df;border-radius:12px;filter:blur(1.4px);"></div>
<div class="t m3" style="left:773.30px;top:1000.98px;font-size:11.6px;color:#eaa532;letter-spacing:0.183px;">Декрет</div>
<div class="r" style="left:862.5px;top:996.0px;width:54.5px;height:23px;background:#fdf2df;border-radius:12px;filter:blur(1.4px);"></div>
<div class="t m3" style="left:871.30px;top:1000.98px;font-size:11.6px;color:#eaa532;letter-spacing:0.183px;">Декрет</div>
<div class="t" style="left:959.50px;top:993.68px;font-size:11.6px;color:#272727;">Специалист по</div>
<div class="t" style="left:959.50px;top:1007.38px;font-size:11.6px;color:#272727;">тестированию</div>
<div class="t" style="left:1128.30px;top:1000.15px;font-size:14px;color:#2a2a2a;letter-spacing:-0.453px;">5212</div>
<div class="r" style="left:1230.5px;top:996.0px;width:45px;height:23px;background:#eaf2f9;border-radius:12px;filter:blur(1.4px);"></div>
<div class="t m3" style="left:1239.30px;top:1000.98px;font-size:11.6px;color:#3f78aa;letter-spacing:-0.133px;">Штат</div>
<div class="t" style="left:1319.50px;top:1000.15px;font-size:14px;color:#2a2a2a;letter-spacing:-0.031px;">15.01.2023</div>
<div class="t" style="left:1504.30px;top:1001.15px;font-size:14px;color:#2a2a2a;">-</div>
<div class="t" style="left:1527.60px;top:1001.34px;font-size:12px;color:#5f5f5f;">-</div>
<svg class="r" style="left:1611px;top:999.5px;" width="17" height="17" viewBox="0 0 17 17" fill="none"><path d="M2.6 14.4 L3.2 10.8 L11.4 2.6 Q12.3 1.7 13.2 2.6 L15 4.4 Q15.9 5.3 15 6.2 L6.8 14.4 Z M10.1 3.9 L13.7 7.5" stroke="#7f7f7f" stroke-width="1.6" fill="none" stroke-linejoin="round"/></svg>
<div class="r" style="left:158px;top:1030px;width:1481px;height:45px;background:#d6e5f2;"></div>
<div class="r" style="left:195px;top:1043.5px;width:18px;height:18px;box-sizing:border-box;border:1.6px solid #3d6a93;border-radius:3.5px;background:transparent;"></div>
<svg class="r" style="left:230px;top:1046.5px;" width="11" height="12" viewBox="0 0 11 12" fill="none"><path d="M1.5 6.1 L5.45 2.4 L9.4 6.1 M1.5 9.7 L5.45 6 L9.4 9.7" stroke="#858a8f" stroke-width="1.2" fill="none" stroke-linecap="round" stroke-linejoin="round"/></svg>
<div class="t m2" style="left:247.80px;top:1046.39px;font-size:13.6px;color:#1e1e1e;letter-spacing:0.326px;">Проектный офис</div>
<div class="r" style="left:579px;top:1159px;width:476px;height:20px;background:#2b2b2b;border-radius:10px 10px 0 0;"></div>
<div class="r" style="left:948px;top:1160px;width:1px;height:5px;background:#454545;"></div>
</body></html>
